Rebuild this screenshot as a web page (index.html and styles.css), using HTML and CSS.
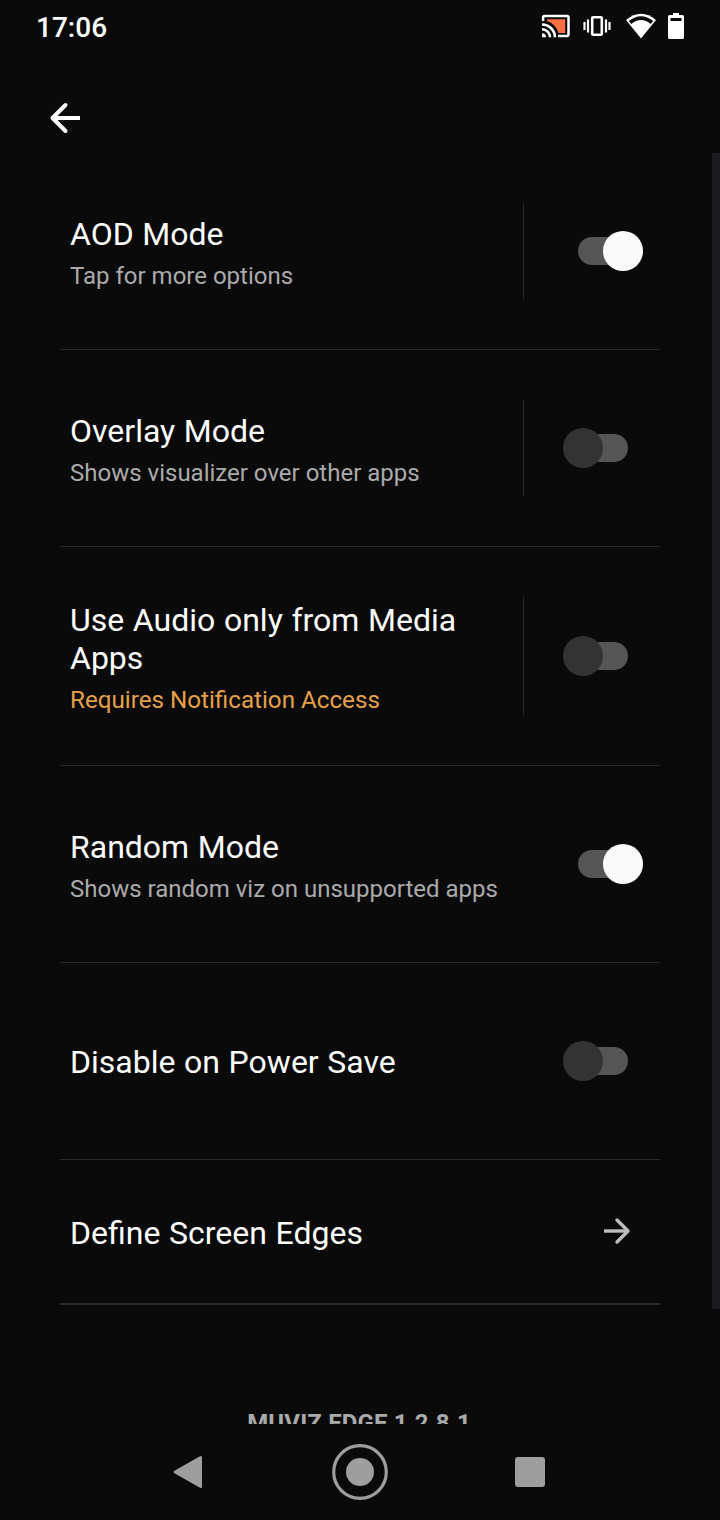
FILE: index.html
```html
<!DOCTYPE html>
<html lang="en">
<head>
<meta charset="utf-8">
<title>Muviz Edge Settings</title>
<link rel="stylesheet" href="styles.css">
</head>
<body>
<div class="screen">
  <header class="status">
    <span class="clock">17:06</span>
    <svg class="status-icons" width="150" height="54" viewBox="0 0 150 54" fill="none">
      <path d="M3.100 21V17.500a1.400 1.400 0 0 1 1.400-1.400H27.100a1.400 1.400 0 0 1 1.400 1.400V34.600a1.400 1.400 0 0 1-1.400 1.400H18" stroke="#fff" stroke-width="2.500"/>
      <path d="M7 19.300H25.200V33H18.500Q15.500 23.500 7 21Z" fill="#ff7043"/>
      <path d="M2 24.500A13 13 0 0 1 15 37.300M2 29.300A8 8 0 0 1 10 37.300" stroke="#fff" stroke-width="2.600"/>
      <path d="M2 33.300A4 4 0 0 1 6 37.300H2Z" fill="#fff"/>
      <rect x="52.200" y="17.200" width="9.600" height="17.600" rx="1" stroke="#fff" stroke-width="2.600"/>
      <path d="M48 19.500V32.500M66 19.500V32.500M44.500 22V30M69.500 22V30" stroke="#fff" stroke-width="2.200"/>
      <path d="M101 38.500L86 20Q101 7.500 116 20Z" fill="#fff"/>
      <path d="M88.800 21Q101 11.500 113.200 21L110.800 24Q101 16 91.200 24Z" fill="#0a0a0a"/>
      <path d="M129.500 15H133V13H139V15H142.500a1.500 1.500 0 0 1 1.500 1.500V37.500a1.500 1.500 0 0 1-1.500 1.500H129.500a1.500 1.500 0 0 1-1.500-1.500V16.500a1.500 1.500 0 0 1 1.500-1.500Z" fill="#fff"/>
      <path d="M130.500 18H141.500V21H130.500Z" fill="#0a0a0a"/>
    </svg>
  </header>
  <div class="toolbar">
    <svg width="32" height="32" viewBox="0 0 32 32" fill="none" stroke="#fff" stroke-width="4">
      <path d="M31 16H4"/><path d="M16.500 3L3.500 16L16.500 29" stroke-linecap="round" stroke-linejoin="round"/>
    </svg>
  </div>
  <main class="scroll">
    <div class="list">
      <section class="row">
        <div class="label"><div class="title">AOD Mode</div><div class="sub">Tap for more options</div></div>
        <div class="control split"><span class="switch on"><i class="thumb"></i></span></div>
      </section>
      <section class="row">
        <div class="label"><div class="title">Overlay Mode</div><div class="sub">Shows visualizer over other apps</div></div>
        <div class="control split"><span class="switch"><i class="thumb"></i></span></div>
      </section>
      <section class="row tall">
        <div class="label"><div class="title">Use Audio only from Media Apps</div><div class="sub warn">Requires Notification Access</div></div>
        <div class="control split"><span class="switch"><i class="thumb"></i></span></div>
      </section>
      <section class="row">
        <div class="label"><div class="title">Random Mode</div><div class="sub">Shows random viz on unsupported apps</div></div>
        <div class="control"><span class="switch on"><i class="thumb"></i></span></div>
      </section>
      <section class="row">
        <div class="label"><div class="title">Disable on Power Save</div></div>
        <div class="control"><span class="switch"><i class="thumb"></i></span></div>
      </section>
      <section class="row link">
        <div class="label"><div class="title">Define Screen Edges</div></div>
        <svg class="arrow" width="28" height="28" viewBox="0 0 28 28" fill="none" stroke="#bdbdbd" stroke-width="3.400">
          <path d="M1 14H24"/><path d="M14 3L25 14L14 25" stroke-linecap="round" stroke-linejoin="round"/>
        </svg>
      </section>
      <div class="version">MUVIZ EDGE 1.2.8.1</div>
    </div>
    <div class="scrollbar"></div>
  </main>
  <nav class="nav">
    <svg width="56" height="56" viewBox="0 0 56 56"><path d="M13 28L38.700 13.300V42.700Z" fill="#9e9e9e" stroke="#9e9e9e" stroke-width="2.600" stroke-linejoin="round"/></svg>
    <svg width="56" height="56" viewBox="0 0 56 56"><circle cx="28" cy="28" r="26.300" fill="none" stroke="#9e9e9e" stroke-width="3.200"/><circle cx="28" cy="28" r="14" fill="#9e9e9e"/></svg>
    <svg width="56" height="56" viewBox="0 0 56 56"><rect x="13" y="13" width="30" height="30" rx="3" fill="#9e9e9e"/></svg>
  </nav>
</div>
</body>
</html>
```
FILE: styles.css
```css
* { box-sizing: border-box; }
body { margin: 0; background: #0a0a0a; color: #fff; font-family: Roboto, sans-serif; }
.screen { width: 720px; height: 1520px; display: flex; flex-direction: column; overflow: hidden; }
.status { height: 54px; padding: 0 30px 0 36px; display: flex; align-items: center; justify-content: space-between; }
.clock { padding-top: 2px; font-size: 28px; font-weight: 500; line-height: 52px; }
.status-icons { display: block; }
.toolbar { height: 99px; padding: 48px 0 0 49px; }
.toolbar svg { display: block; }
.scroll { height: 1271px; display: flex; justify-content: space-between; overflow: hidden; }
.list { width: 600px; margin-left: 60px; }
.row { height: 197px; padding: 50px 0; border-bottom: 1px solid #29292e; display: flex; }
.row.tall { height: 219px; }
.row.link { height: 145px; padding: 0; align-items: center; border-bottom-width: 2px; }
.label { flex: 1; min-width: 0; padding: 2px 10px 0; display: flex; flex-direction: column; justify-content: center; }
.link .label { padding-top: 3px; }
.title { font-size: 32px; line-height: 38px; word-spacing: 0.7px; }
.sub { margin-top: 9px; font-size: 24px; line-height: 28px; color: #aaa; white-space: nowrap; }
.sub.warn { color: #e5a04a; font-size: 24.2px; }
.control { width: 137px; padding: 0 17px 0 39px; border-left: 1px solid transparent; display: flex; align-items: center; }
.control.split { border-left-color: #29292e; }
.switch { width: 55px; height: 28px; margin-left: 10px; border-radius: 14px; background: #555; display: flex; align-items: center; }
.thumb { width: 40px; height: 40px; flex: none; margin-left: -10px; border-radius: 50%; background: #333; }
.switch.on { width: 65px; margin-left: 15px; justify-content: flex-end; }
.switch.on .thumb { margin-left: 0; background: #fafafa; }
.arrow { margin: 0 29px 1px 0; }
.version { margin: 104px 2px 0 0; font-size: 24px; line-height: 28px; font-weight: 700; letter-spacing: 0.15px; text-align: center; color: #aaa; }
.scrollbar { width: 8px; height: 1156px; background: #1a1a1f; }
.nav { height: 96px; padding: 0 162px; display: flex; justify-content: space-between; align-items: center; }
```
